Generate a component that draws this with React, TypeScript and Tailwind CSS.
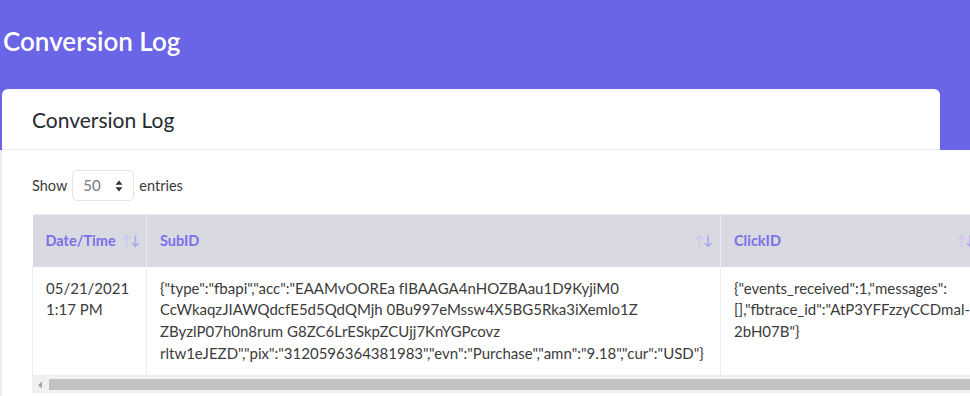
import React from "react";

const subIdLines = [
  '{"type":"fbapi","acc":"EAAMvOOREa fIBAAGA4nHOZBAau1D9KyjiM0',
  "CcWkaqzJIAWQdcfE5d5QdQMjh 0Bu997eMssw4X5BG5Rka3iXemlo1Z",
  "ZByzlP07h0n8rum G8ZC6LrESkpZCUjj7KnYGPcovz",
  'rltw1eJEZD","pix":"3120596364381983","evn":"Purchase","amn":"9.18","cur":"USD"}',
];

const clickIdLines = ['{"events_received":1,"messages":', '[],"fbtrace_id":"AtP3YFFzzyCCDmal-', '2bH07B"}'];

function SortIcon() {
  return (
    <span className="flex shrink-0 items-end text-[13px] leading-none tracking-[-1px]">
      <span className="text-[#cbc8f0]">↑</span>
      <span className="text-[#aaa4ee]">↓</span>
    </span>
  );
}

function HeadCell({ label, width }: { label: string; width: string }) {
  return (
    <th className={`${width} border-r border-[#ececf1] pl-[13px] pr-[8px] py-[15px] text-left align-middle`}>
      <div className="flex items-center justify-between gap-[6px]">
        <span className="whitespace-nowrap text-[14.5px] font-bold text-[#7a70e8]">{label}</span>
        <SortIcon />
      </div>
    </th>
  );
}

export default function App() {
  return (
    <div className="flex h-[396px] w-[970px] overflow-hidden font-['Lato','Liberation_Sans',sans-serif] text-[#3b3b3b]">
      <div className="w-[2px] shrink-0 bg-[linear-gradient(#6a64e6_150px,#ebebf5_150px)]" />
      <div className="min-w-0 flex-1 bg-[linear-gradient(#6a64e6_158px,#ffffff_158px)]">
        <h1 className="pl-[1px] pt-[24px] text-[26px] font-semibold leading-[34px] text-white">Conversion Log</h1>
        <div className="mt-[31px]">
          <div className="flex h-[61px] w-[938px] items-center rounded-t-[6px] border-b border-[#e9e9ee] bg-white px-[30px]">
            <h2 className="text-[21px] leading-none text-[#252a30]">Conversion Log</h2>
          </div>
          <div className="bg-white pl-[30px] pt-[20px]">
            <div className="flex items-center gap-[5px] text-[14.5px]">
              <span>Show</span>
              <div className="flex h-[31px] w-[62px] items-center justify-between rounded-[5px] border border-[#e3e3ea] pl-[10px] pr-[10px]">
                <span className="text-[15px] text-[#7a7a80]">50</span>
                <svg width="8" height="12" viewBox="0 0 8 12" className="fill-[#333]">
                  <path d="M4 0.5 L7.5 4.8 H0.5 Z M4 11.5 L7.5 7.2 H0.5 Z" />
                </svg>
              </div>
              <span>entries</span>
            </div>
            <div className="mt-[13px] w-[960px]">
              <table className="w-[950px] table-fixed border-collapse border-t border-[#ececf1]">
                <thead className="bg-[#d8d9e1]">
                  <tr>
                    <HeadCell label="Date/Time" width="w-[114px]" />
                    <HeadCell label="SubID" width="w-[574px]" />
                    <HeadCell label="ClickID" width="w-[262px]" />
                  </tr>
                </thead>
                <tbody>
                  <tr className="border-b border-[#ececf1] text-[15px] leading-[21.6px]">
                    <td className="border-x border-[#ececf1] pl-[13px] pr-[6px] pb-[11px] pt-[11px] align-top">
                      <div className="whitespace-nowrap">05/21/2021</div>
                      <div>1:17 PM</div>
                    </td>
                    <td className="border-r border-[#ececf1] px-[13px] pb-[11px] pt-[11px] align-top">
                      {subIdLines.map((line) => (
                        <div key={line} className="whitespace-nowrap">{line}</div>
                      ))}
                    </td>
                    <td className="px-[13px] pb-[11px] pt-[11px] align-top">
                      {clickIdLines.map((line) => (
                        <div key={line} className="whitespace-nowrap">{line}</div>
                      ))}
                    </td>
                  </tr>
                </tbody>
              </table>
              <div className="flex h-[17px] items-center bg-[#f1f1f1] pl-[5px]">
                <svg width="6" height="8" viewBox="0 0 6 8" className="fill-[#a3a3a3]">
                  <path d="M1 4 L5 0.5 V7.5 Z" />
                </svg>
                <div className="ml-[6px] h-[11px] flex-1 bg-[#c1c1c1]" />
              </div>
            </div>
          </div>
        </div>
      </div>
    </div>
  );
}
